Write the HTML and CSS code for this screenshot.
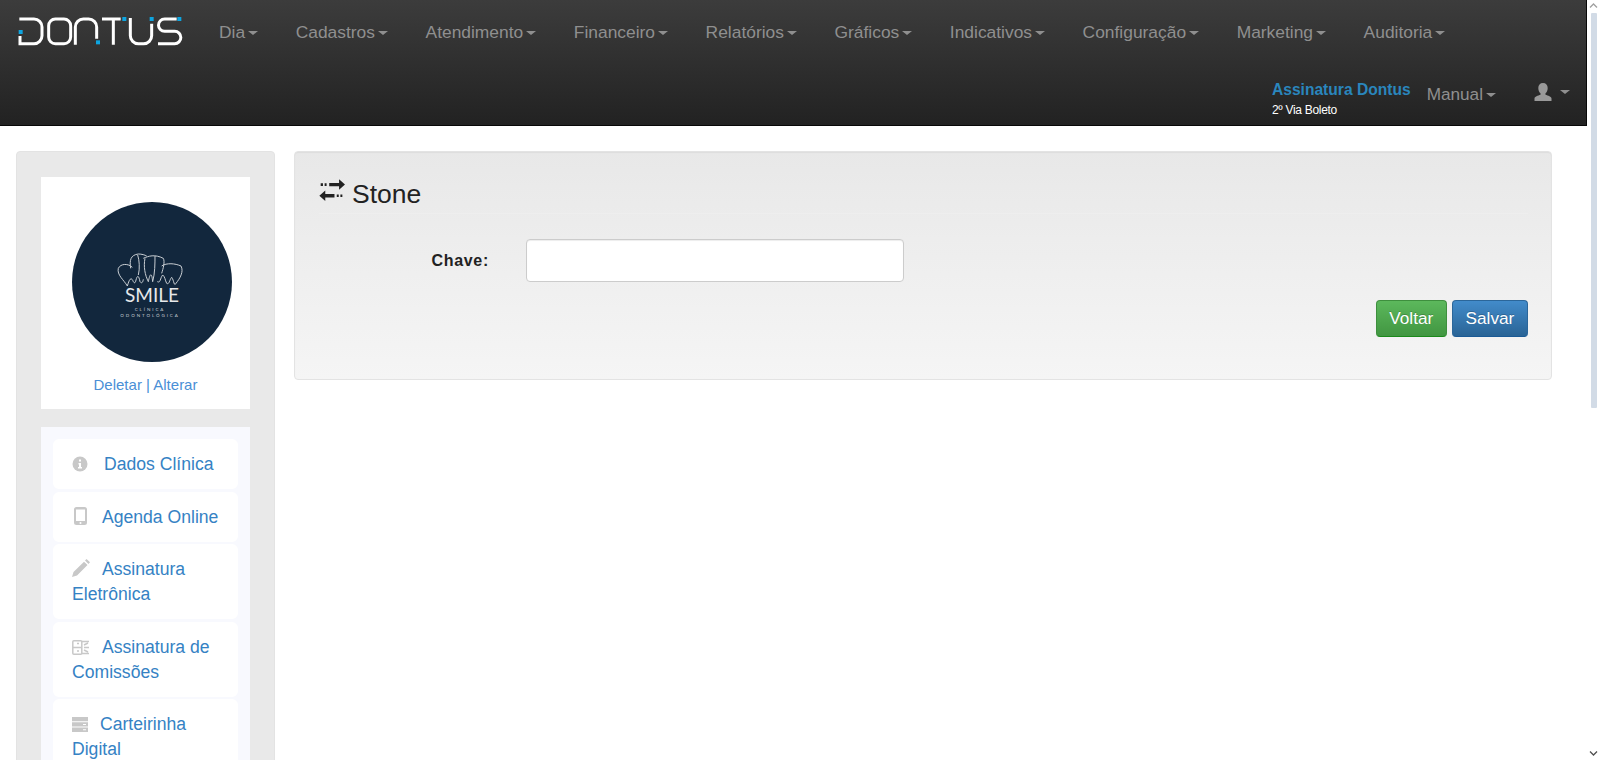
FILE: index.html
```html
<!DOCTYPE html>
<html>
  <head>
    <title>Stone</title>
    <link rel="stylesheet" href="styles.css">
  </head>
  <body>
    <div class="viewport">
      <div class="page">
        <nav class="navbar">
          <a class="brand" href="#">
            <svg width="172" height="38" viewBox="0 0 516 114" fill="none" stroke="#fff" stroke-width="9">
              <path d="M16 21H60a24 24 0 0 1 24 24v26a24 24 0 0 1-24 24H18V72"/>
              <rect x="104" y="21" width="66" height="74" rx="20"/>
              <path d="M184 98V45a24 24 0 0 1 24-24h16a24 24 0 0 1 24 24V80"/>
              <path d="M264 21H320M298 21V98"/>
              <path d="M349 18V71a24 24 0 0 0 24 24h16a24 24 0 0 0 24-24V35"/>
              <path d="M488 21H452a18 18 0 0 0 0 37H482a18 18 0 0 1 0 37H432"/>
              <g fill="#0ea5e0" stroke="none">
                <rect x="14" y="54" width="12" height="12"/>
                <rect x="246" y="85" width="12" height="12"/>
                <rect x="325" y="15" width="12" height="12"/>
                <rect x="407" y="15" width="12" height="12"/>
                <rect x="490" y="15" width="12" height="12"/>
              </g>
            </svg>
          </a>
          <div class="nav-rows">
            <ul class="nav-main">
              <li><a href="#">Dia<b class="caret"></b></a></li>
              <li><a href="#">Cadastros<b class="caret"></b></a></li>
              <li><a href="#">Atendimento<b class="caret"></b></a></li>
              <li><a href="#">Financeiro<b class="caret"></b></a></li>
              <li><a href="#">Relatórios<b class="caret"></b></a></li>
              <li><a href="#">Gráficos<b class="caret"></b></a></li>
              <li><a href="#">Indicativos<b class="caret"></b></a></li>
              <li><a href="#">Configuração<b class="caret"></b></a></li>
              <li><a href="#">Marketing<b class="caret"></b></a></li>
              <li><a href="#">Auditoria<b class="caret"></b></a></li>
            </ul>
            <div class="nav-user">
              <div class="subscription">
                <a class="sub-title" href="#">Assinatura Dontus</a>
                <a class="sub-link" href="#">2º Via Boleto</a>
              </div>
              <a class="manual" href="#">Manual<b class="caret"></b></a>
              <a class="user" href="#">
                <svg width="18" height="18" viewBox="0 0 18 18" fill="#999"><path d="M9 0c3 0 4.700 2.100 4.700 5 0 2.400-1 4.300-2.200 5.300v1.500c2.500.9 6 1.700 6 3.700V18H.5v-2.500c0-2 3.500-2.800 6-3.700v-1.500C5.300 9.300 4.300 7.400 4.300 5 4.300 2.100 6 0 9 0z"/></svg>
                <b class="caret"></b>
              </a>
            </div>
          </div>
        </nav>

        <div class="content">
          <aside class="sidebar">
            <div class="logo-box">
              <svg class="logo" width="160" height="160" viewBox="0 0 160 160">
                <circle cx="80" cy="80" r="80" fill="#12273d"/>
                <g transform="translate(28 28) scale(.3333)" fill="none" stroke="#c9ced3" stroke-width="3">
                  <path d="M97 112C85 100 62 100 55 115C50 135 72 150 82 168C86 155 92 135 100 155C103 160 106 160 108 150C112 135 116 135 120 155C124 160 128 160 130 148"/>
                  <path d="M92 115C88 90 92 75 115 72C125 72 135 75 140 78M113 75C118 90 120 115 115 135"/>
                  <path d="M130 85C145 78 165 72 190 85C195 95 190 115 185 130"/>
                  <path d="M135 85C130 110 135 135 145 155C150 130 155 125 158 155C165 130 165 100 165 78"/>
                  <path d="M185 108C200 98 225 100 243 108C252 125 240 145 228 160C222 172 222 150 215 142C208 150 208 165 200 160C195 150 195 140 188 135C180 145 182 160 172 155"/>
                </g>
                <text class="logo-name" x="80" y="100" text-anchor="middle">SMILE</text>
                <text class="logo-sub" x="78" y="109" text-anchor="middle">CLÍNICA</text>
                <text class="logo-sub" x="78" y="115" text-anchor="middle">ODONTOLÓGICA</text>
              </svg>
              <div class="logo-links"><a href="#">Deletar</a> | <a href="#">Alterar</a></div>
            </div>

            <ul class="side-menu">
              <li>
                <a href="#">
                  <svg class="ic ic-info" width="16" height="16" viewBox="0 0 16 16"><circle cx="8" cy="8" r="7.500" fill="#c8c8c8"/><path d="M7 3.500h2v2H7zM6.500 7H9v4h1v1.500H6V11h1V8.500h-.5z" fill="#fff"/></svg>Dados Clínica
                </a>
              </li>
              <li>
                <a href="#">
                  <svg class="ic ic-phone" width="13" height="18" viewBox="0 0 13 18"><path fill-rule="evenodd" d="M2.500 0h8A2.500 2.500 0 0 1 13 2.500v13a2.500 2.500 0 0 1-2.500 2.500h-8A2.500 2.500 0 0 1 0 15.500v-13A2.500 2.500 0 0 1 2.500 0zM2 2.500V14h9V2.500zM6.500 15a1 1 0 1 0 0 2 1 1 0 0 0 0-2z" fill="#c8c8c8"/></svg>Agenda Online
                </a>
              </li>
              <li>
                <a href="#">
                  <svg class="ic" width="18" height="18" viewBox="0 0 18 18"><path d="M14.500 0L18 3.300l-1.500 1.600L13 1.600zM12 2.700l3.500 3.300L5 16.500 0 18l1.500-5z" fill="#c8c8c8"/></svg>Assinatura Eletrônica
                </a>
              </li>
              <li>
                <a href="#">
                  <svg class="ic ic-sign" width="17" height="15" viewBox="0 0 17 15" fill="none" stroke="#c8c8c8" stroke-width="1.500"><rect x=".8" y=".8" width="9" height="13.400" rx="1"/><path d="M1 7.500h8M5 3.500h2M5 11h2M10 1.500h7M12 5l4-2M12 7.500h5M12 10l4 2M10 13.500h7"/></svg>Assinatura de Comissões
                </a>
              </li>
              <li>
                <a href="#">
                  <svg class="ic" width="16" height="15" viewBox="0 0 16 15" fill="#c8c8c8"><path fill-rule="evenodd" d="M0 0h16v4.300H0zM0 5.300h16v4.300H0zM0 10.600h16V15H0zM11 7v1h3V7zM11 12.300v1h3v-1z"/></svg>Carteirinha Digital
                </a>
              </li>
            </ul>
          </aside>

          <main class="panel">
            <h3 class="panel-title">
              <svg class="title-ic" width="27" height="23" viewBox="12 8 80 70" fill="#222"><path d="M42 23H72V12L90 28 72 44V33H42zM30 46L12 62 30 78V67H58V57H30zM16 24h7v8h-7zM28 24h6v8h-6zM65 58h6v8h-6zM76 58h6v8h-6z"/></svg>
              Stone
            </h3>
            <form class="form-row">
              <label for="chave">Chave:</label>
              <input type="text" id="chave">
            </form>
            <div class="actions">
              <button class="btn btn-green" type="button">Voltar</button>
              <button class="btn btn-blue" type="button">Salvar</button>
            </div>
          </main>
        </div>
      </div>

      <div class="scrollbar">
        <svg class="arrow" width="9" height="5" viewBox="0 0 9 5"><path d="M1 4.500l3.500-3.500 3.500 3.500" fill="none" stroke="#a0a0a0" stroke-width="1.300"/></svg>
        <div class="track"><div class="thumb"></div></div>
        <svg class="arrow" width="9" height="5" viewBox="0 0 9 5"><path d="M1 .5l3.500 3.500 3.500-3.500" fill="none" stroke="#505050" stroke-width="1.300"/></svg>
      </div>
    </div>
  </body>
</html>
```

FILE: styles.css
```css
* {
  box-sizing: border-box;
}

html, body {
  margin: 0;
  height: 100%;
  overflow: hidden;
}

body {
  font-family: "Liberation Sans", Arial, sans-serif;
  font-size: 14px;
  color: #333;
  background: #fff;
}

a {
  text-decoration: none;
}

.viewport {
  display: flex;
  height: 760px;
}

.page {
  flex: 1;
  min-width: 0;
  height: 760px;
  overflow: hidden;
}

/* navbar */
.navbar {
  display: flex;
  height: 126px;
  background: linear-gradient(to bottom, #3c3c3c 0, #222 100%);
  border-bottom: 1px solid #080808;
  border-right: 1px solid #080808;
}

.brand {
  width: 200px;
  flex: none;
  padding: 12px 0 0 14px;
}

.nav-rows {
  flex: 1;
  display: flex;
  flex-direction: column;
}

.nav-main {
  display: flex;
  margin: 0;
  padding: 0;
  list-style: none;
}

.nav-main a {
  display: block;
  padding: 22px 18.800px 22px 19px;
  line-height: 20px;
  font-size: 17.400px;
  color: #8f8f8f;
  white-space: nowrap;
}

.nav-main li + li a {
  padding-left: 18.800px;
}

.caret {
  display: inline-block;
  width: 0;
  height: 0;
  margin-left: 3px;
  vertical-align: middle;
  border-top: 4px solid #8f8f8f;
  border-left: 5px solid transparent;
  border-right: 5px solid transparent;
}

.nav-user {
  display: flex;
  justify-content: flex-end;
  align-items: flex-start;
  padding: 12px 16px 0 0;
}

.subscription {
  display: flex;
  flex-direction: column;
  margin-right: 16px;
  padding-top: 4px;
}

.sub-title {
  font-size: 15.600px;
  font-weight: bold;
  line-height: 20px;
  color: #2a86bd;
}

.sub-link {
  font-size: 12px;
  line-height: 20px;
  letter-spacing: -0.3px;
  color: #fff;
}

.manual {
  font-size: 17.200px;
  line-height: 20px;
  padding-top: 8px;
  color: #8f8f8f;
}

.user {
  display: flex;
  align-items: center;
  margin-left: 38px;
  padding-top: 7px;
}

.user .caret {
  margin-left: 8px;
}

/* main area */
.content {
  display: flex;
  align-items: flex-start;
  gap: 19px;
  padding: 25px 35px 0 16px;
}

.sidebar {
  width: 259px;
  flex: none;
  padding: 25px 24px 19px;
  background: #e9e9e9;
  border: 1px solid #e3e3e3;
  border-radius: 4px;
}

.logo-box {
  height: 232px;
  padding-top: 25px;
  background: #fff;
  text-align: center;
}

.logo {
  display: block;
  margin: 0 0 13px 31px;
}

.logo-name {
  font-family: Lato, sans-serif;
  font-size: 19px;
  fill: #e6e8ea;
}

.logo-sub {
  font-family: Lato, sans-serif;
  font-size: 4.500px;
  letter-spacing: 1.900px;
  fill: #c9ced3;
}

.logo-links {
  font-size: 15px;
  line-height: 20px;
  color: #4a8fd6;
}

.logo-links a {
  color: #4a8fd6;
}

.side-menu {
  margin: 18px 0 0;
  padding: 12px;
  list-style: none;
  background: #f8f9fe;
}

.side-menu li {
  margin-bottom: 2.600px;
  background: #fff;
  border-radius: 6px;
}

.side-menu a {
  display: block;
  padding: 13px 19px 12px;
  font-size: 17.600px;
  line-height: 25px;
  color: #3582c4;
}

.ic {
  margin-right: 12px;
  vertical-align: -2px;
}

.ic-info {
  margin-right: 16px;
}

.ic-phone {
  margin-left: 2px;
  margin-right: 15px;
}

.ic-sign {
  margin-right: 13px;
}

/* panel */
.panel {
  flex: 1;
  height: 229px;
  padding: 19px 23px 19px 24px;
  background: linear-gradient(to bottom, #e8e8e8 0, #f5f5f5 100%);
  border: 1px solid #e3e3e3;
  border-radius: 4px;
  box-shadow: inset 0 1px 1px rgba(0, 0, 0, .05);
}

.panel-title {
  display: flex;
  align-items: center;
  gap: 6px;
  height: 43px;
  margin: 0 0 25px;
  padding-top: 4px;
  font-size: 26.500px;
  font-weight: normal;
  color: #222;
  border-bottom: 1px solid #eee;
}

.title-ic {
  margin-top: -10px;
}

.form-row {
  display: flex;
  align-items: center;
}

.form-row label {
  width: 170px;
  text-align: right;
  font-size: 16px;
  font-weight: bold;
  letter-spacing: .7px;
  color: #222;
}

.form-row input {
  width: 378px;
  height: 43px;
  margin-left: 37px;
  padding: 6px 12px;
  background: #fff;
  border: 1px solid #ccc;
  border-radius: 4px;
  box-shadow: inset 0 1px 1px rgba(0, 0, 0, .075);
}

.actions {
  display: flex;
  justify-content: flex-end;
  gap: 5px;
  margin-top: 18px;
}

.btn {
  height: 37px;
  padding: 0 12.700px;
  font-family: inherit;
  font-size: 17.200px;
  color: #fff;
  border-radius: 4px;
  border: 1px solid;
  text-shadow: 0 -1px 0 rgba(0, 0, 0, .2);
}

.btn-green {
  background: linear-gradient(to bottom, #5cb85c 0, #419641 100%);
  border-color: #3e8f3e;
  border-bottom-color: #1a8a1a;
}

.btn-blue {
  background: linear-gradient(to bottom, #428bca 0, #2a6496 100%);
  border-color: #2b669a;
  border-bottom-color: #1a5a96;
}

/* scrollbar drawn by hand, the page doesn't scroll here */
.scrollbar {
  width: 13px;
  flex: none;
  display: flex;
  flex-direction: column;
  align-items: center;
  padding: 3px 0 4px;
  background: #fff;
}

.track {
  flex: 1;
  width: 100%;
  padding-top: 5px;
}

.thumb {
  width: 6px;
  height: 395px;
  margin: 0 auto;
  background: #d2dbe6;
  border-radius: 1px;
}
```
